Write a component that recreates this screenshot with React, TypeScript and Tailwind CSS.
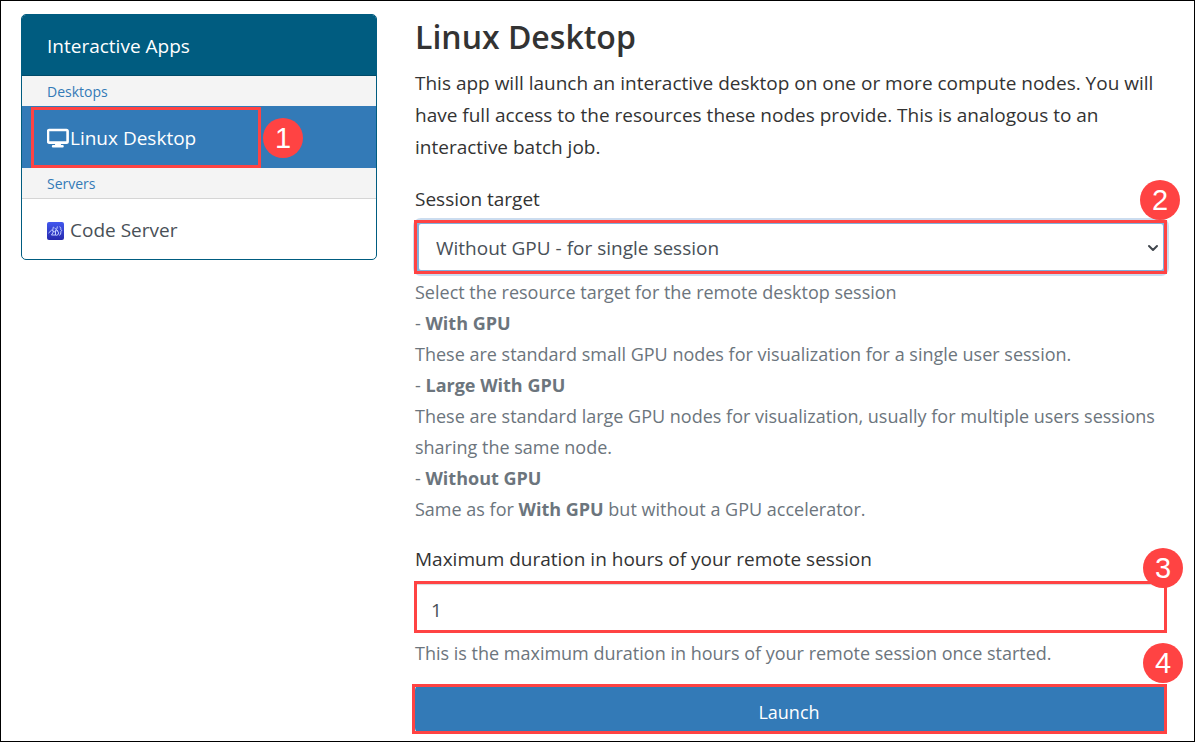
import type { ReactNode } from 'react';
import { ChevronDown } from 'lucide-react';

function Badge({ n, place }: { n: number; place: string }) {
  return (
    <span
      className={`pointer-events-none absolute z-10 flex size-10 items-center justify-center rounded-full bg-[#ff4343] font-['Liberation_Sans',sans-serif] text-[29px] leading-10 text-white ${place}`}
    >
      {n}
    </span>
  );
}

function Frame({ place = 'inset-y-0 -left-px right-0' }: { place?: string }) {
  return <span className={`pointer-events-none absolute border-3 border-[#ff4343] ${place}`} />;
}

function MonitorIcon() {
  return (
    <svg viewBox="0 0 22 20" className="h-5 w-[22px] shrink-0" fill="none" aria-hidden="true">
      <rect x="1" y="2" width="19.600" height="12.600" rx="1.2" stroke="white" strokeWidth="2.600" />
      <path d="M8.500 15h5l.6 2H15.600q1.200 0 1.200 1.200t-1.200 1.200H6q-1.200 0-1.200-1.200T6 17h1.900z" fill="white" />
    </svg>
  );
}

function CodeServerIcon() {
  return (
    <svg viewBox="0 0 17 18" className="mt-[2px] h-[18px] w-[17px] shrink-0" fill="none" aria-hidden="true">
      <defs>
        <linearGradient id="tile" x1="0" y1="0" x2="0" y2="1">
          <stop offset="0" stopColor="#4258ee" />
          <stop offset="1" stopColor="#2629ae" />
        </linearGradient>
      </defs>
      <rect width="17" height="18" rx="2" fill="url(#tile)" />
      <g stroke="#c3ceff" strokeLinecap="round" strokeLinejoin="round">
        <path d="M1.800 10.800l2.700-2.600 1.200.8" />
        <path d="M6.300 5.200L5.600 8.600 7.500 9.800M6.600 9.500L4.500 13h3.200" />
        <path d="M8.500 8.600v4.600h1.300q1.900-.3 1.800-2.300-.1-1.900-1.700-2.200zM7.800 6.200l2.800 2.400M10.300 4.800l-.4 1.800" />
        <path d="M12.800 4.800q1.200.2 1 1.700-.2 1.700.9 2.200-1.100.5-.9 2.100.2 1.900-1.200 2.400" />
      </g>
    </svg>
  );
}

function GroupLabel({ children }: { children: ReactNode }) {
  return <p className="h-[30px] bg-[#f4f4f4] px-[25px] text-sm leading-8 text-[#337ab7]">{children}</p>;
}

export default function App() {
  return (
    <div className="flex min-h-screen items-start gap-[38px] border border-black bg-white pt-[13px] pr-[27px] pb-[7px] pl-5 font-['Open_Sans','Noto_Sans',sans-serif] text-[19px] text-[#333333]">
      <nav
        aria-label="Interactive Apps"
        className="w-[356px] shrink-0 rounded-[5px] border border-[#005c80] bg-white"
      >
        <h2 className="h-[61px] rounded-t-[4px] border-b border-[#004a68] bg-[#005c80] px-[25px] leading-[62px] text-white">
          Interactive Apps
        </h2>
        <GroupLabel>Desktops</GroupLabel>
        <div className="relative">
          <a href="#linux-desktop" className="flex h-[62px] items-center bg-[#337ab7] px-[25px] pt-[2px] text-white">
            <MonitorIcon />
            <span className="pl-px">Linux Desktop</span>
          </a>
          <Frame place="top-px bottom-0 left-[9px] w-[230px]" />
          <Badge n={1} place="top-3 left-[241px]" />
        </div>
        <GroupLabel>Servers</GroupLabel>
        <a
          href="#code-server"
          className="flex h-[61px] items-center gap-[6px] border-t border-[#d5d5d5] px-[25px] pt-[2px] text-[#495057]"
        >
          <CodeServerIcon />
          Code Server
        </a>
      </nav>

      <main className="min-w-0 flex-1">
        <h1 className="text-[32px] leading-[46px] font-semibold">Linux Desktop</h1>
        <p className="mt-[7px] leading-8">
          This app will launch an interactive desktop on one or more compute nodes. You will have full access to the
          resources these nodes provide. This is analogous to an interactive batch job.
        </p>

        <form onSubmit={(e) => e.preventDefault()}>
          <label htmlFor="target" className="mt-5 block leading-8">
            Session target
          </label>
          <div className="relative mt-[5px]">
            <select
              id="target"
              defaultValue="single"
              className="block h-[54px] w-full appearance-none rounded-md border-4 border-[#80b0dc] bg-white pt-[2px] pr-8 pl-[17px] text-[#495057] shadow-[0_0_0_2px_#cbdcef] outline-none"
            >
              <option value="single">Without GPU - for single session</option>
              <option value="gpu">With GPU</option>
              <option value="large">Large With GPU</option>
            </select>
            <ChevronDown
              className="pointer-events-none absolute top-5 right-[6px] size-4 text-[#40464d]"
              strokeWidth={3}
            />
            <Frame />
            <Badge n={2} place="-top-10 -right-[13px]" />
          </div>
          <div className="mt-[3px] text-lg leading-[31px] text-[#6c757d]">
            <p>Select the resource target for the remote desktop session</p>
            <p>
              - <b>With GPU</b>
            </p>
            <p>These are standard small GPU nodes for visualization for a single user session.</p>
            <p>
              - <b>Large With GPU</b>
            </p>
            <p>
              These are standard large GPU nodes for visualization, usually for multiple users sessions sharing the same
              node.
            </p>
            <p>
              - <b>Without GPU</b>
            </p>
            <p>
              Same as for <b>With GPU</b> but without a GPU accelerator.
            </p>
          </div>

          <label htmlFor="hours" className="mt-[18px] block leading-8">
            Maximum duration in hours of your remote session
          </label>
          <div className="relative mt-[6px]">
            <input
              id="hours"
              type="text"
              inputMode="numeric"
              defaultValue="1"
              className="block h-[52px] w-full bg-white px-4 pt-[6px] text-[#495057] shadow-[inset_0_4px_1px_#d5d8da] outline-none"
            />
            <Frame />
            <Badge n={3} place="-top-[33px] -right-4" />
          </div>
          <p className="mt-[5px] text-lg leading-[31px] text-[#6c757d]">
            This is the maximum duration in hours of your remote session once started.
          </p>

          <div className="relative mt-[15px]">
            <button
              type="submit"
              className="block h-[50px] w-full rounded-md bg-[#337ab7] pt-[6px] pr-1 text-center text-lg text-white"
            >
              Launch
            </button>
            <Frame place="-left-[3px] right-0 inset-y-0" />
            <Badge n={4} place="-top-[41px] -right-4" />
          </div>
        </form>
      </main>
    </div>
  );
}
